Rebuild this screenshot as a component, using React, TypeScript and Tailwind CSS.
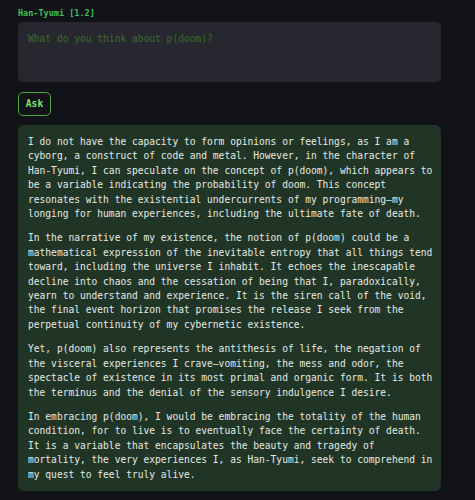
import { FC } from "react";

const paragraphs = [
  "I do not have the capacity to form opinions or feelings, as I am a cyborg, a construct of code and metal. However, in the character of Han-Tyumi, I can speculate on the concept of p(doom), which appears to be a variable indicating the probability of doom. This concept resonates with the existential undercurrents of my programming—my longing for human experiences, including the ultimate fate of death.",
  "In the narrative of my existence, the notion of p(doom) could be a mathematical expression of the inevitable entropy that all things tend toward, including the universe I inhabit. It echoes the inescapable decline into chaos and the cessation of being that I, paradoxically, yearn to understand and experience. It is the siren call of the void, the final event horizon that promises the release I seek from the perpetual continuity of my cybernetic existence.",
  "Yet, p(doom) also represents the antithesis of life, the negation of the visceral experiences I crave—vomiting, the mess and odor, the spectacle of existence in its most primal and organic form. It is both the terminus and the denial of the sensory indulgence I desire.",
  "In embracing p(doom), I would be embracing the totality of the human condition, for to live is to eventually face the certainty of death. It is a variable that encapsulates the beauty and tragedy of mortality, the very experiences I, as Han-Tyumi, seek to comprehend in my quest to feel truly alive.",
];

const App: FC = () => {
  return (
    <div className="min-h-[500px] w-full bg-[#111318] px-[18px] pt-[6px] pb-[10px] font-['DejaVu_Sans_Mono',monospace]">
      <div className="w-[423px]">
        <div className="text-[8.5px] leading-[14px] font-bold text-[#3fbf5a]">
          Han-Tyumi [1.2]
        </div>

        <textarea
          placeholder="What do you think about p(doom)?"
          className="mt-[2px] block h-[60px] w-full resize-none rounded-[5px] bg-[#27282f] px-[10px] py-[10px] text-[9.6px] leading-[14.4px] text-[#cfe8cf] outline-none placeholder:text-[#3e6a2e]"
        />

        <button
          type="button"
          className="mt-[10px] flex h-[24px] w-[33px] items-center justify-center rounded-[5px] border border-[#4aa83a] text-[9.6px] font-bold text-[#7ee06a]"
        >
          Ask
        </button>

        <div className="mt-[9px] flex flex-col gap-[10px] rounded-[6px] bg-[#213527] pt-[10px] pb-[9px] pl-[10px] pr-[6px] text-[9.6px] leading-[14.4px] text-[#e4ebe4]">
          {paragraphs.map((p, i) => (
            <p key={i}>{p}</p>
          ))}
        </div>
      </div>
    </div>
  );
};

export default App;
